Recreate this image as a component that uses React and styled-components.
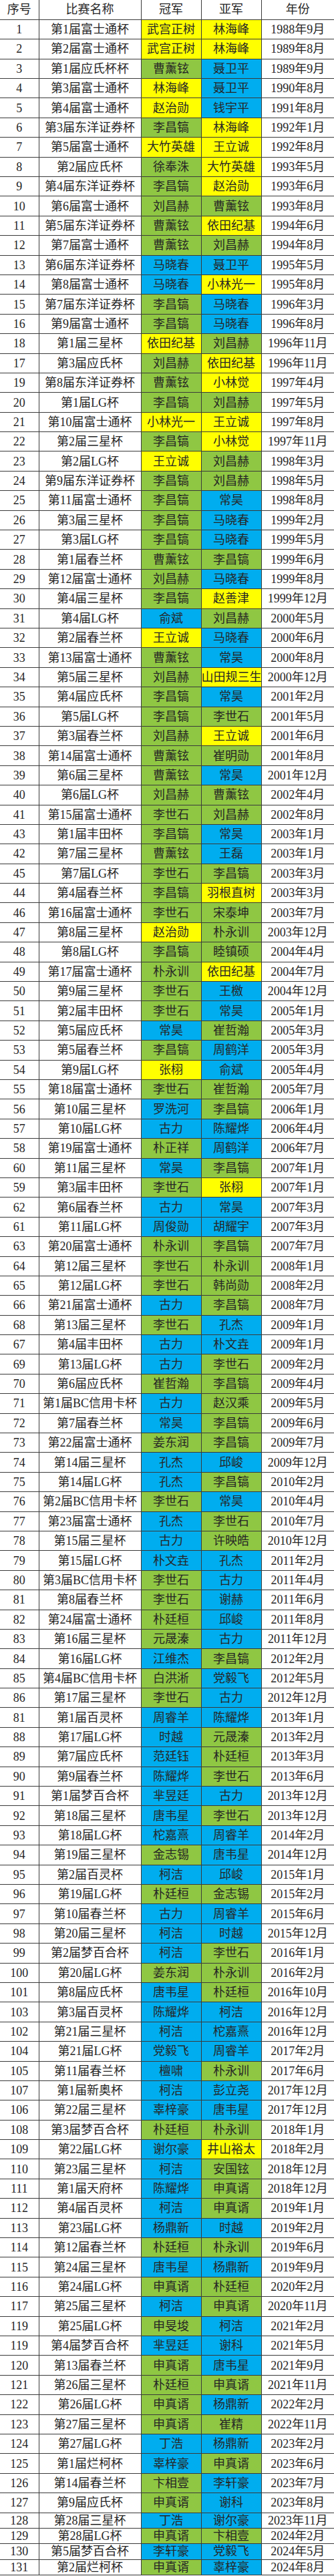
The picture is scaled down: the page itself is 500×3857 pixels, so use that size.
import React from "react"
import styled, { createGlobalStyle } from "styled-components"

const GlobalStyle = createGlobalStyle`
  html, body {
    margin: 0;
    padding: 0;
    background: #fff;
  }
`

const FILLS = {
  Y: "#ffff00",
  G: "#8fc743",
  B: "#00adef",
}

// num | name | champion | colour | runner-up | colour | date
const RAW = `
1|第1届富士通杯|武宫正树|Y|林海峰|Y|1988年9月
2|第2届富士通杯|武宫正树|Y|林海峰|Y|1989年8月
3|第1届应氏杯杯|曹薰铉|G|聂卫平|B|1989年9月
4|第3届富士通杯|林海峰|Y|聂卫平|B|1990年8月
5|第4届富士通杯|赵治勋|Y|钱宇平|B|1991年8月
6|第3届东洋证券杯|李昌镐|G|林海峰|Y|1992年1月
7|第5届富士通杯|大竹英雄|Y|王立诚|Y|1992年8月
8|第2届应氏杯|徐奉洙|G|大竹英雄|Y|1993年5月
9|第4届东洋证券杯|李昌镐|G|赵治勋|Y|1993年6月
10|第6届富士通杯|刘昌赫|G|曹薰铉|G|1993年8月
11|第5届东洋证券杯|曹薰铉|G|依田纪基|Y|1994年6月
12|第7届富士通杯|曹薰铉|G|刘昌赫|G|1994年8月
13|第6届东洋证券杯|马晓春|B|聂卫平|B|1995年5月
14|第8届富士通杯|马晓春|B|小林光一|Y|1995年8月
15|第7届东洋证券杯|李昌镐|G|马晓春|B|1996年3月
16|第9届富士通杯|李昌镐|G|马晓春|B|1996年8月
18|第1届三星杯|依田纪基|Y|刘昌赫|G|1996年11月
17|第3届应氏杯|刘昌赫|G|依田纪基|Y|1996年11月
19|第8届东洋证券杯|曹薰铉|G|小林觉|Y|1997年4月
20|第1届LG杯|李昌镐|G|刘昌赫|G|1997年5月
21|第10届富士通杯|小林光一|Y|王立诚|Y|1997年8月
22|第2届三星杯|李昌镐|G|小林觉|Y|1997年11月
23|第2届LG杯|王立诚|Y|刘昌赫|G|1998年3月
24|第9届东洋证券杯|李昌镐|G|刘昌赫|G|1998年5月
25|第11届富士通杯|李昌镐|G|常昊|B|1998年8月
26|第3届三星杯|李昌镐|G|马晓春|B|1999年2月
27|第3届LG杯|李昌镐|G|马晓春|B|1999年5月
28|第1届春兰杯|曹薰铉|G|李昌镐|G|1999年6月
29|第12届富士通杯|刘昌赫|G|马晓春|B|1999年8月
30|第4届三星杯|李昌镐|G|赵善津|Y|1999年12月
31|第4届LG杯|俞斌|B|刘昌赫|G|2000年5月
32|第2届春兰杯|王立诚|Y|马晓春|B|2000年6月
33|第13届富士通杯|曹薰铉|G|常昊|B|2000年8月
34|第5届三星杯|刘昌赫|G|山田规三生|Y|2000年12月
35|第4届应氏杯|李昌镐|G|常昊|B|2001年2月
36|第5届LG杯|李昌镐|G|李世石|G|2001年5月
37|第3届春兰杯|刘昌赫|G|王立诚|Y|2001年6月
38|第14届富士通杯|曹薰铉|G|崔明勋|G|2001年8月
39|第6届三星杯|曹薰铉|G|常昊|B|2001年12月
40|第6届LG杯|刘昌赫|G|曹薰铉|G|2002年4月
41|第15届富士通杯|李世石|G|刘昌赫|G|2002年8月
43|第1届丰田杯|李昌镐|G|常昊|B|2003年1月
42|第7届三星杯|曹薰铉|G|王磊|B|2003年1月
45|第7届LG杯|李世石|G|李昌镐|G|2003年3月
44|第4届春兰杯|李昌镐|G|羽根直树|Y|2003年3月
46|第16届富士通杯|李世石|G|宋泰坤|G|2003年7月
47|第8届三星杯|赵治勋|Y|朴永训|G|2003年12月
48|第8届LG杯|李昌镐|G|睦镇硕|G|2004年4月
49|第17届富士通杯|朴永训|G|依田纪基|Y|2004年7月
50|第9届三星杯|李世石|G|王檄|B|2004年12月
51|第2届丰田杯|李世石|G|常昊|B|2005年1月
52|第5届应氏杯|常昊|B|崔哲瀚|G|2005年3月
53|第5届春兰杯|李昌镐|G|周鹤洋|B|2005年3月
54|第9届LG杯|张栩|Y|俞斌|B|2005年4月
55|第18届富士通杯|李世石|G|崔哲瀚|G|2005年7月
56|第10届三星杯|罗洗河|B|李昌镐|G|2006年1月
57|第10届LG杯|古力|B|陈耀烨|B|2006年4月
58|第19届富士通杯|朴正祥|G|周鹤洋|B|2006年7月
60|第11届三星杯|常昊|B|李昌镐|G|2007年1月
59|第3届丰田杯|李世石|G|张栩|Y|2007年1月
62|第6届春兰杯|古力|B|常昊|B|2007年3月
61|第11届LG杯|周俊勋|B|胡耀宇|B|2007年3月
63|第20届富士通杯|朴永训|G|李昌镐|G|2007年7月
64|第12届三星杯|李世石|G|朴永训|G|2008年1月
65|第12届LG杯|李世石|G|韩尚勋|G|2008年2月
66|第21届富士通杯|古力|B|李昌镐|G|2008年7月
68|第13届三星杯|李世石|G|孔杰|B|2009年1月
67|第4届丰田杯|古力|B|朴文垚|B|2009年1月
69|第13届LG杯|古力|B|李世石|G|2009年2月
70|第6届应氏杯|崔哲瀚|G|李昌镐|G|2009年4月
71|第1届BC信用卡杯|古力|B|赵汉乘|G|2009年5月
72|第7届春兰杯|常昊|B|李昌镐|G|2009年6月
73|第22届富士通杯|姜东润|G|李昌镐|G|2009年7月
74|第14届三星杯|孔杰|B|邱峻|B|2009年12月
75|第14届LG杯|孔杰|B|李昌镐|G|2010年2月
76|第2届BC信用卡杯|李世石|G|常昊|B|2010年4月
77|第23届富士通杯|孔杰|B|李世石|G|2010年7月
78|第15届三星杯|古力|B|许映皓|G|2010年12月
79|第15届LG杯|朴文垚|B|孔杰|B|2011年2月
80|第3届BC信用卡杯|李世石|G|古力|B|2011年4月
81|第8届春兰杯|李世石|G|谢赫|B|2011年6月
82|第24届富士通杯|朴廷桓|G|邱峻|B|2011年8月
83|第16届三星杯|元晟溱|G|古力|B|2011年12月
84|第16届LG杯|江维杰|B|李昌镐|G|2012年2月
85|第4届BC信用卡杯|白洪淅|G|党毅飞|B|2012年5月
86|第17届三星杯|李世石|G|古力|B|2012年12月
81|第1届百灵杯|周睿羊|B|陈耀烨|B|2013年1月
88|第17届LG杯|时越|B|元晟溱|G|2013年2月
89|第7届应氏杯|范廷钰|B|朴廷桓|G|2013年3月
90|第9届春兰杯|陈耀烨|B|李世石|G|2013年6月
91|第1届梦百合杯|芈昱廷|B|古力|B|2013年12月
92|第18届三星杯|唐韦星|B|李世石|G|2013年12月
93|第18届LG杯|柁嘉熹|B|周睿羊|B|2014年2月
94|第19届三星杯|金志锡|G|唐韦星|B|2014年12月
95|第2届百灵杯|柯洁|B|邱峻|B|2015年1月
96|第19届LG杯|朴廷桓|G|金志锡|G|2015年2月
97|第10届春兰杯|古力|B|周睿羊|B|2015年6月
98|第20届三星杯|柯洁|B|时越|B|2015年12月
99|第2届梦百合杯|柯洁|B|李世石|G|2016年1月
100|第20届LG杯|姜东润|G|朴永训|G|2016年2月
101|第8届应氏杯|唐韦星|B|朴廷桓|G|2016年10月
103|第3届百灵杯|陈耀烨|B|柯洁|B|2016年12月
102|第21届三星杯|柯洁|B|柁嘉熹|B|2016年12月
104|第21届LG杯|党毅飞|B|周睿羊|B|2017年2月
105|第11届春兰杯|檀啸|B|朴永训|G|2017年6月
107|第1届新奥杯|柯洁|B|彭立尧|B|2017年12月
106|第22届三星杯|辜梓豪|B|唐韦星|B|2017年12月
108|第3届梦百合杯|朴廷桓|G|朴永训|G|2018年1月
109|第22届LG杯|谢尔豪|B|井山裕太|Y|2018年2月
110|第23届三星杯|柯洁|B|安国铉|G|2018年12月
111|第1届天府杯|陈耀烨|B|申真谞|G|2018年12月
112|第4届百灵杯|柯洁|B|申真谞|G|2019年1月
113|第23届LG杯|杨鼎新|B|时越|B|2019年2月
114|第12届春兰杯|朴廷桓|G|朴永训|G|2019年6月
115|第24届三星杯|唐韦星|B|杨鼎新|B|2019年9月
116|第24届LG杯|申真谞|G|朴廷桓|G|2020年2月
117|第25届三星杯|柯洁|B|申真谞|G|2020年11月
119|第25届LG杯|申旻埈|G|柯洁|B|2021年2月
119|第4届梦百合杯|芈昱廷|B|谢科|B|2021年5月
120|第13届春兰杯|申真谞|G|唐韦星|B|2021年9月
121|第26届三星杯|朴廷桓|G|申真谞|G|2021年11月
122|第26届LG杯|申真谞|G|杨鼎新|B|2022年2月
123|第27届三星杯|申真谞|G|崔精|G|2022年11月
124|第27届LG杯|丁浩|B|杨鼎新|B|2023年2月
125|第1届烂柯杯|辜梓豪|B|申真谞|G|2023年6月
126|第14届春兰杯|卞相壹|G|李轩豪|B|2023年7月
127|第9届应氏杯|申真谞|G|谢科|B|2023年8月
128|第28届三星杯|丁浩|B|谢尔豪|B|2023年11月
129|第28届LG杯|申真谞|G|卞相壹|G|2024年2月
130|第5届梦百合杯|李轩豪|B|党毅飞|B|2024年5月
131|第2届烂柯杯|申真谞|G|辜梓豪|B|2024年8月
`

const rows = RAW.trim()
  .split("\n")
  .map((line) => {
    const [num, name, champ, champFill, runner, runnerFill, date] = line.split("|")
    return { num, name, champ, champFill, runner, runnerFill, date }
  })

// the last few rows of the sheet were squeezed shorter
const SHORT_FROM = 127

const Sheet = styled.table`
  width: 500px;
  table-layout: fixed;
  border-collapse: collapse;
  font-family: "Liberation Serif", "Noto Sans CJK SC", serif;
  font-size: 18px;
  color: #262626;
`

const Col = styled.col`
  width: ${(p) => p.$w}px;
`

const Row = styled.tr`
  height: ${(p) => (p.$short ? 23.4 : 29.4)}px;
`

const Cell = styled.td`
  padding: 0;
  text-align: center;
  vertical-align: middle;
  white-space: nowrap;
  overflow: visible;
  line-height: 1;
  border: 1px solid #3a3a3a;
  background: ${(p) => (p.$fill ? FILLS[p.$fill] : "#fff")};
  &:first-child {
    border-left: none;
  }
  &:last-child {
    border-right: none;
  }
`

const HeadCell = styled(Cell).attrs({ as: "th" })`
  font-weight: normal;
  border-top: none;
`

export default function App() {
  return (
    <>
      <GlobalStyle />
      <Sheet>
        <colgroup>
          <Col $w={58} />
          <Col $w={153} />
          <Col $w={90} />
          <Col $w={90} />
          <Col $w={109} />
        </colgroup>
        <thead>
          <Row>
            <HeadCell>序号</HeadCell>
            <HeadCell>比赛名称</HeadCell>
            <HeadCell>冠军</HeadCell>
            <HeadCell>亚军</HeadCell>
            <HeadCell>年份</HeadCell>
          </Row>
        </thead>
        <tbody>
          {rows.map((r, i) => (
            <Row key={i} $short={i >= SHORT_FROM}>
              <Cell>{r.num}</Cell>
              <Cell>{r.name}</Cell>
              <Cell $fill={r.champFill}>{r.champ}</Cell>
              <Cell $fill={r.runnerFill}>{r.runner}</Cell>
              <Cell>{r.date}</Cell>
            </Row>
          ))}
        </tbody>
      </Sheet>
    </>
  )
}
